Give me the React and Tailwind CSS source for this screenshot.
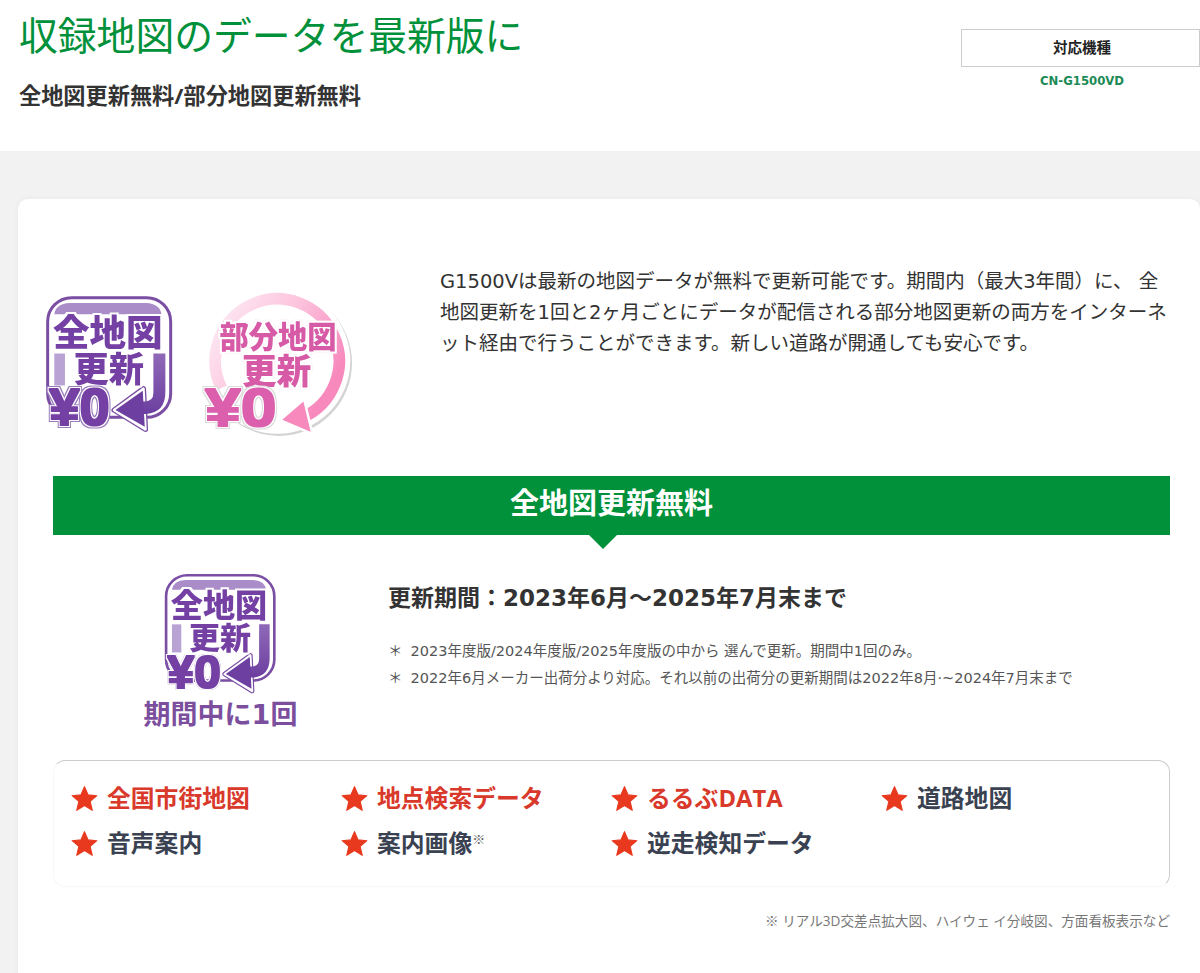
import React from "react";

const features = [
  { name: "全国市街地図", red: true },
  { name: "地点検索データ", red: true },
  { name: "るるぶDATA", red: true },
  { name: "道路地図" },
  { name: "音声案内" },
  { name: "案内画像", note: true },
  { name: "逆走検知データ" },
];

function Star() {
  return (
    <svg viewBox="0 0 24 24" className="w-[27px] h-[27px] shrink-0 -mr-[1px]">
      <path
        d="M12 1.5 L15.2 8.8 L23 9.5 L17 14.6 L18.9 22.5 L12 18.3 L5.1 22.5 L7 14.6 L1 9.5 L8.8 8.8 Z"
        fill="#e8391e"
        stroke="#e8391e"
        strokeWidth="1"
        strokeLinejoin="round"
      />
    </svg>
  );
}

// text fattened + white halo, optional outer outline, all through one filter
function TextFilter({ id, halo, heavy, outline }) {
  return (
    <filter id={id} x="-30%" y="-30%" width="160%" height="160%" colorInterpolationFilters="sRGB">
      <feMorphology in="SourceAlpha" operator="dilate" radius={halo + 2} result="outer" />
      <feFlood floodColor={outline || "#fff"} />
      <feComposite in2="outer" operator="in" result="outline" />
      <feMorphology in="SourceAlpha" operator="dilate" radius={halo} result="inner" />
      <feFlood floodColor="#fff" />
      <feComposite in2="inner" operator="in" result="white" />
      <feMorphology in="SourceGraphic" operator="dilate" radius={heavy} result="body" />
      <feMerge>
        <feMergeNode in="outline" />
        <feMergeNode in="white" />
        <feMergeNode in="body" />
      </feMerge>
    </filter>
  );
}

function BadgeText({ x, y, size, fill, children, length, family, filter }) {
  return (
    <text
      x={x}
      y={y}
      fontSize={size}
      fontWeight="900"
      fontFamily={family || "'Noto Sans CJK JP', sans-serif"}
      textAnchor="middle"
      fill={fill}
      filter={`url(#${filter})`}
      textLength={length}
      lengthAdjust="spacingAndGlyphs"
    >
      {children}
    </text>
  );
}

// 全地図更新 badge, coordinates are in 3x px of the original
function PurpleBadge({ className, id }) {
  return (
    <svg viewBox="40 40 400 430" className={className}>
      <defs>
        <linearGradient id={id} x1="0" y1="0" x2="0" y2="1">
          <stop offset="0" stopColor="#8f69b8" />
          <stop offset="1" stopColor="#6c3fa0" />
        </linearGradient>
        <TextFilter id={`${id}-t`} halo={4} heavy={1} />
        <TextFilter id={`${id}-y`} halo={6} heavy={3} outline="#9a7cbc" />
      </defs>
      <rect x="54" y="54" width="370" height="360" rx="72" fill="#fff" stroke="#7a4ea3" strokeWidth="9" />
      <path d="M74 104 Q78 72 120 70 L350 70 Q392 72 396 104 Z" fill="#a98cc8" />
      <rect x="74" y="222" width="32" height="96" fill="#b9a3d4" />
      <path d="M254 392 L342 328 L348 450 Z" fill="#fff" stroke="#7a4ea3" strokeWidth="16" strokeLinejoin="round" />
      <path d="M254 392 L342 328 L348 450 Z" fill="#fff" stroke="#fff" strokeWidth="8" strokeLinejoin="round" />
      <path d="M372 222 L408 222 L408 338 Q408 400 350 404 L320 404 L320 366 L346 366 Q372 366 372 340 Z" fill={`url(#${id})`} />
      <path d="M258 392 L340 334 L346 442 Z" fill="#6c3fa0" />
      <BadgeText x="235" y="198" size="110" fill="#7440a4" length="330" filter={`${id}-t`}>全地図</BadgeText>
      <BadgeText x="238" y="308" size="106" fill="#7440a4" length="212" filter={`${id}-t`}>更新</BadgeText>
      <BadgeText x="150" y="438" size="156" fill="#7440a4" length="182" family="'Liberation Sans', sans-serif" filter={`${id}-y`}>¥0</BadgeText>
    </svg>
  );
}

// 部分地図更新 badge
function PinkBadge({ className }) {
  return (
    <svg viewBox="510 20 470 450" className={className}>
      <defs>
        <linearGradient id="ring" x1="0" y1="0" x2="1" y2="0.6">
          <stop offset="0" stopColor="#fdeef6" />
          <stop offset="0.5" stopColor="#fcc4dd" />
          <stop offset="1" stopColor="#f789bd" />
        </linearGradient>
        <TextFilter id="pink-t" halo={5} heavy={1} outline="#f3d6e6" />
        <TextFilter id="pink-y" halo={6} heavy={3} outline="#dcdcdc" />
      </defs>
      <circle cx="745" cy="252" r="212" fill="#d4d4d4" />
      <circle cx="740" cy="246" r="212" fill="#fff" />
      <path d="M578 325 A180 180 0 1 1 810 412" fill="none" stroke="url(#ring)" strokeWidth="34" />
      <path d="M748 418 L818 358 L842 458 Z" fill="#f789bd" stroke="#fff" strokeWidth="7" strokeLinejoin="round" />
      <BadgeText x="742" y="208" size="88" fill="#d65aa6" length="340" filter="pink-t">部分地図</BadgeText>
      <BadgeText x="738" y="314" size="102" fill="#d65aa6" length="202" filter="pink-t">更新</BadgeText>
      <BadgeText x="634" y="436" size="156" fill="#dc5fae" length="208" family="'Liberation Sans', sans-serif" filter="pink-y">¥0</BadgeText>
    </svg>
  );
}

export default function App() {
  return (
    <div className="w-[1200px] h-[973px] overflow-hidden bg-[#f2f2f2] font-['Open_Sans','Noto_Sans_CJK_JP',sans-serif] text-[#333]">
      <header className="h-[151px] bg-white flex justify-between">
        <div className="pl-[19px]">
          <h1 className="text-[38.8px] leading-[56px] mt-[7px] font-normal text-[#00913a]">収録地図のデータを最新版に</h1>
          <p className="mt-[19px] text-[22.2px] leading-[28px] font-bold">全地図更新無料/部分地図更新無料</p>
        </div>
        <div className="w-[239px] pt-[29px] text-center">
          <div className="h-[38px] border border-[#ccc] pl-[3px] flex items-center justify-center text-[14.5px] font-bold text-[#222]">対応機種</div>
          <p className="mt-[5px] pl-[3px] text-[11.7px] leading-[18px] font-bold text-[#1c8a55] font-['DejaVu_Sans','Noto_Sans_CJK_JP',sans-serif]">CN-G1500VD</p>
        </div>
      </header>

      <main className="pt-[48px] pl-[18px]">
        <section className="bg-white rounded-[10px] pl-[35px] pr-[30px] h-[800px] shadow-[0_0_6px_rgba(0,0,0,0.04)]">
          <div className="flex h-[277px]">
            <div className="w-[387px] shrink-0 flex items-start pt-[94px] -ml-[10px] gap-[22px]">
              <PurpleBadge id="pg1" className="w-[133px] h-[143px] shrink-0" />
              <PinkBadge className="w-[162px] h-[155px] shrink-0 -mt-[10px]" />
            </div>
            <p className="pt-[67px] pl-[10px] flex-1 text-[19.5px] leading-[31px] text-[#333] font-['DejaVu_Sans','Noto_Sans_CJK_JP',sans-serif]">
              G1500Vは最新の地図データが無料で更新可能です。期間内（最大3年間）に、 全地図更新を1回と2ヶ月ごとにデータが配信される部分地図更新の両方をインターネット経由で行うことができます。新しい道路が開通しても安心です。
            </p>
          </div>

          <div className="relative h-[59px] bg-[#00913a] flex items-center justify-center">
            <h2 className="text-[29px] leading-[40px] -mt-[6px] font-bold text-white">全地図更新無料</h2>
            <span className="absolute left-[536px] top-[59px] border-x-[14px] border-x-transparent border-t-[14px] border-t-[#00913a]"></span>
          </div>

          <div className="flex h-[225px]">
            <div className="w-[335px] shrink-0 flex flex-col items-center pt-[36px]">
              <PurpleBadge id="pg2" className="w-[117px] h-[126px]" />
              <p className="mt-[1px] text-[27px] leading-[34px] font-bold text-[#7b4f9d] font-['DejaVu_Sans','Noto_Sans_CJK_JP',sans-serif]">期間中に1回</p>
            </div>
            <div className="pt-[46px]">
              <h3 className="text-[23px] leading-[34px] font-bold text-[#333] font-['DejaVu_Sans','Noto_Sans_CJK_JP',sans-serif]">更新期間：2023年6月～2025年7月末まで</h3>
              <ul className="mt-[23px] text-[14.5px] leading-[27px] text-[#555] font-['DejaVu_Sans','Noto_Sans_CJK_JP',sans-serif]">
                <li className="flex gap-[8px]"><span>＊</span><span>2023年度版/2024年度版/2025年度版の中から 選んで更新。期間中1回のみ。</span></li>
                <li className="flex gap-[8px]"><span>＊</span><span>2022年6月メーカー出荷分より対応。それ以前の出荷分の更新期間は2022年8月·~2024年7月末まで</span></li>
              </ul>
            </div>
          </div>

          <div className="h-[127px] border border-[#ccc] border-l-[#f7f7f7] border-b-[#f7f7f7] rounded-[12px] pl-[17px] pt-[15px] grid grid-cols-[270px_270px_270px_270px] auto-rows-[45px]">
            {features.map((f) => (
              <div key={f.name} className="flex items-center gap-[10px]">
                <Star />
                <span className={`text-[23.8px] font-bold ${f.red ? "text-[#d9392a]" : "text-[#3a4252]"}`}>
                  {f.name}
                  {f.note && <sup className="text-[13px] font-normal text-[#666] top-[-8px]">※</sup>}
                </span>
              </div>
            ))}
          </div>

          <p className="mt-[24px] text-right text-[13.6px] leading-[20px] text-[#777]">※ リアル3D交差点拡大図、ハイウェ イ分岐図、方面看板表示など</p>
        </section>
      </main>
    </div>
  );
}
